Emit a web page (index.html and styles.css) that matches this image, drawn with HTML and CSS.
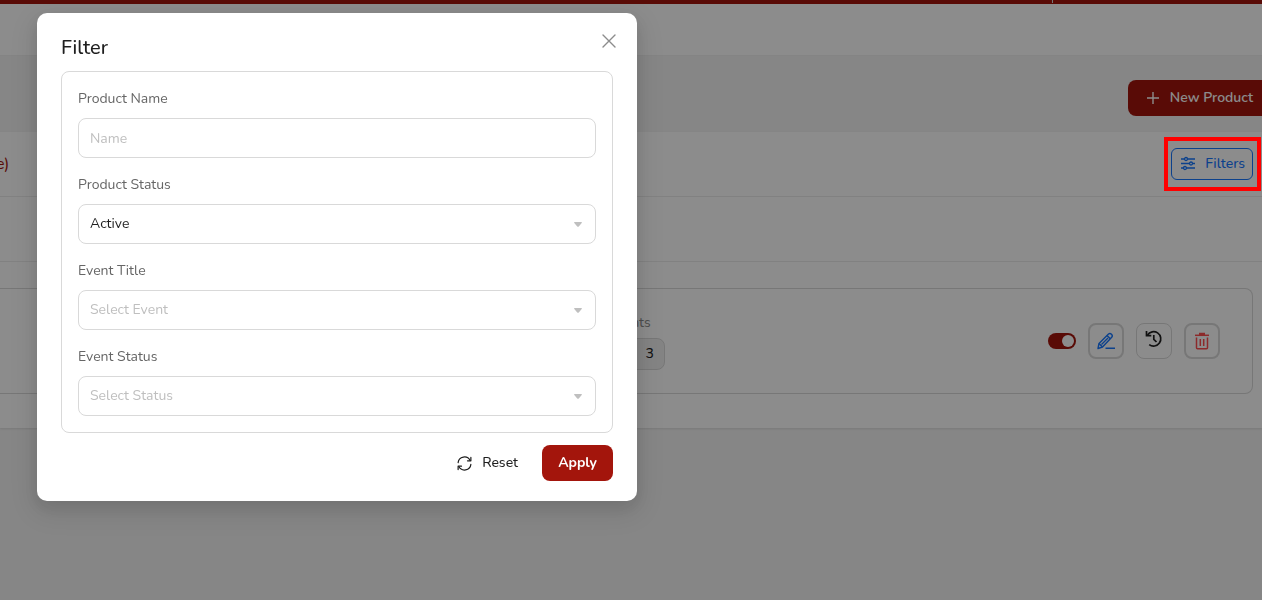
FILE: index.html
```
<!DOCTYPE html>
<html lang="en">
<head>
    <meta charset="UTF-8">
    <meta name="viewport" content="width=device-width, initial-scale=1.0">
    <title>Products</title>
    <link rel="stylesheet" href="styles.css">
</head>
<body>
    <div class="topbar"><span class="topbar-divider"></span></div>
    <header class="header"></header>

    <div class="page-actions">
        <button type="button" class="btn btn-primary btn-new">
            <svg width="14" height="14" viewBox="0 0 14 14" fill="none" stroke="currentColor" stroke-width="1.4"><path d="M7 1v12M1 7h12"/></svg>
            New Product
        </button>
    </div>

    <main class="panel">
        <div class="panel-bar">
            <a href="#" class="tab">e)</a>
            <div class="filters-wrap">
                <button type="button" class="btn-filters">
                    <svg width="16" height="16" viewBox="0 0 16 16" fill="none" stroke="currentColor" stroke-width="1.3">
                        <path d="M1 3h3.5M7.5 3H15M1 7.500h8.5M12.500 7.500H15M1 12h2.500M6.500 12H15"/>
                        <circle cx="6" cy="3" r="1.500"/><circle cx="11" cy="7.500" r="1.500"/><circle cx="5" cy="12" r="1.500"/>
                    </svg>
                    Filters
                </button>
                <span class="highlight"></span>
            </div>
        </div>
        <div class="panel-row"></div>

        <div class="product">
            <div class="product-events">
                <span class="product-label">Events</span>
                <span class="count">3</span>
            </div>
            <div class="product-actions">
                <input type="checkbox" class="switch" aria-label="Product enabled" checked>
                <button type="button" class="icon-btn edit" aria-label="Edit">
                    <svg width="20" height="20" viewBox="0 0 20 20" fill="none" stroke="currentColor" stroke-width="1.4" stroke-linejoin="round">
                        <path d="M2 17.500l1-5L12.500 3q1.500-1.200 3 .2t.2 3L6.500 16z"/>
                        <path d="M3 12.500l3.500 3.500M11 4.500l3.300 3.300M5.500 13.500l6.500-6.500M9.500 17.300H19"/>
                    </svg>
                </button>
                <button type="button" class="icon-btn history" aria-label="History">
                    <svg width="20" height="20" viewBox="0 0 20 20" fill="none" stroke="currentColor" stroke-width="1.7">
                        <path d="M3.500 6A7.200 7.200 0 1 1 5.200 15.600"/>
                        <path d="M2.500 2v4.700h4.800M9.800 6v4.300l2.700 2.700"/>
                    </svg>
                </button>
                <button type="button" class="icon-btn delete" aria-label="Delete">
                    <svg width="20" height="20" viewBox="0 0 20 20" fill="none" stroke="currentColor" stroke-width="1.5">
                        <path d="M3 4.300h14"/><path d="M7 3h6" stroke-width="2.5"/>
                        <path d="M4.500 6.500v10.200q0 1 1 1h9q1 0 1-1V6.500M8.300 8v7M11.700 8v7"/>
                    </svg>
                </button>
            </div>
        </div>
    </main>

    <div class="mask">
        <form class="modal" role="dialog" aria-labelledby="filterTitle">
            <div class="modal-header">
                <h1 id="filterTitle">Filter</h1>
                <button type="button" class="close" aria-label="Close">
                    <svg width="14" height="14" viewBox="0 0 14 14" fill="none" stroke="currentColor" stroke-width="1.4" stroke-linecap="round"><path d="M1 1l12 12M13 1L1 13"/></svg>
                </button>
            </div>

            <div class="fields">
                <div class="field">
                    <label for="name">Product Name</label>
                    <input type="text" id="name" class="control" placeholder="Name">
                </div>
                <div class="field">
                    <label for="status">Product Status</label>
                    <div class="select-wrap">
                        <select id="status" class="control">
                            <option>Active</option>
                            <option>Inactive</option>
                        </select>
                        <svg class="caret" width="8" height="5" viewBox="0 0 8 5"><path d="M.5 0h7q.8.500 0 1.200L5 4.300q-1 1-2 0L.5 1.200Q-.3.500.5 0z" fill="currentColor"/></svg>
                    </div>
                </div>
                <div class="field">
                    <label for="event">Event Title</label>
                    <div class="select-wrap">
                        <select id="event" class="control empty">
                            <option>Select Event</option>
                        </select>
                        <svg class="caret" width="8" height="5" viewBox="0 0 8 5"><path d="M.5 0h7q.8.500 0 1.200L5 4.300q-1 1-2 0L.5 1.200Q-.3.500.5 0z" fill="currentColor"/></svg>
                    </div>
                </div>
                <div class="field">
                    <label for="eventStatus">Event Status</label>
                    <div class="select-wrap">
                        <select id="eventStatus" class="control empty">
                            <option>Select Status</option>
                        </select>
                        <svg class="caret" width="8" height="5" viewBox="0 0 8 5"><path d="M.5 0h7q.8.500 0 1.200L5 4.300q-1 1-2 0L.5 1.200Q-.3.500.5 0z" fill="currentColor"/></svg>
                    </div>
                </div>
            </div>

            <div class="modal-footer">
                <button type="reset" class="btn btn-text">
                    <svg width="15" height="15" viewBox="0 0 16 16" fill="none" stroke="currentColor" stroke-width="1.3" stroke-linecap="round" stroke-linejoin="round">
                        <path d="M1.200 7A6.800 6.800 0 0 1 14 4.700M14.800 9A6.800 6.800 0 0 1 2 11.300"/>
                        <path d="M14.800 1.500v3.600h-3.600M1.200 14.500v-3.600h3.600"/>
                    </svg>
                    Reset
                </button>
                <button type="submit" class="btn btn-primary btn-apply">Apply</button>
            </div>
        </form>
    </div>
</body>
</html>
```
FILE: styles.css
```
:root {
    --primary: #a3150c;
    --blue: #1677ff;
    --border: #d9d9d9;
    --text: #1f1f1f;
}

* {
    margin: 0;
    padding: 0;
    box-sizing: border-box;
}

body {
    background: #f4f4f4;
    color: var(--text);
    font-family: Nunito, "Open Sans", sans-serif;
    font-size: 14px;
    line-height: 22px;
    min-height: 100vh;
    overflow: hidden;
}

button,
input,
select {
    font: inherit;
    color: inherit;
}

button {
    cursor: pointer;
}

svg {
    flex-shrink: 0;
}

/* Page */
.topbar {
    height: 4px;
    background: var(--primary);
    display: flex;
    justify-content: flex-end;
    padding-right: 209px;
}

.topbar-divider {
    width: 1px;
    height: 3px;
    background: #d9d9d9;
}

.header {
    height: 52px;
    background: #fff;
    border-bottom: 1px solid #f0f0f0;
}

.page-actions {
    display: flex;
    justify-content: flex-end;
    padding: 24px 0 16px;
}

.btn {
    display: inline-flex;
    align-items: center;
    gap: 10px;
    height: 36px;
    border: none;
    border-radius: 8px;
    white-space: nowrap;
}

.btn-primary {
    background: var(--primary);
    color: #fff;
    padding: 0 16px;
}

.btn-new {
    padding-left: 18px;
    margin-right: -7px;
    font-weight: 600;
}

.panel {
    background: #fff;
    padding-bottom: 34px;
    box-shadow: 0 1px 2px rgba(0, 0, 0, 0.1);
}

.panel-bar {
    display: flex;
    align-items: center;
    justify-content: space-between;
    height: 65px;
    padding-right: 9px;
    border-bottom: 1px solid #ececec;
}

.tab {
    color: var(--primary);
    font-size: 16px;
    text-decoration: none;
    margin-left: -4px;
}

.filters-wrap {
    position: relative;
}

.btn-filters {
    display: flex;
    align-items: center;
    gap: 9px;
    height: 32px;
    padding: 0 7px 0 8px;
    background: #fff;
    border: 1px solid var(--blue);
    border-radius: 6px;
    color: var(--blue);
    font-weight: 500;
}

.highlight {
    position: absolute;
    inset: -11px -8px -11px -7px;
    border: 4px solid #ff0000;
    z-index: 20;
    pointer-events: none;
}

.panel-row {
    height: 65px;
    border-bottom: 1px solid #ececec;
}

.product {
    display: grid;
    grid-template-columns: 17fr 18fr;
    align-items: center;
    height: 106px;
    margin: 26px 9px 0 0;
    padding-right: 32px;
    border: 1px solid var(--border);
    border-left: none;
    border-radius: 0 8px 8px 0;
}

.product-events {
    grid-column: 2;
    grid-row: 1;
    display: flex;
    flex-direction: column;
    align-items: flex-start;
    gap: 4px;
    margin-left: 16px;
}

.product-label {
    color: #8c8c8c;
}

.count {
    height: 32px;
    padding: 4px 10px 4px 36px;
    background: #f0f0f0;
    border: 1px solid var(--border);
    border-radius: 8px;
    font-weight: 500;
}

.product-actions {
    grid-column: 2;
    grid-row: 1;
    justify-self: end;
    display: flex;
    align-items: center;
    gap: 12px;
}

.switch {
    appearance: none;
    display: flex;
    align-items: center;
    justify-content: flex-end;
    width: 28px;
    height: 16px;
    padding: 2px;
    background: var(--primary);
    border-radius: 8px;
}

.switch::before {
    content: '';
    width: 12px;
    height: 12px;
    background: #fff;
    border-radius: 50%;
}

.icon-btn {
    display: grid;
    place-items: center;
    width: 36px;
    height: 36px;
    background: #fff;
    border: 2px solid var(--border);
    border-radius: 8px;
}

.edit {
    color: var(--blue);
}

.history {
    border-width: 1px;
    padding-bottom: 4px;
}

.delete {
    color: #ff4d4f;
}

/* Filter dialog */
.mask {
    position: fixed;
    inset: 0;
    z-index: 10;
    padding: 13px 37px;
    background: rgba(0, 0, 0, 0.45);
}

.modal {
    max-width: 600px;
    padding: 20px 24px;
    background: #fff;
    border-radius: 10px;
    box-shadow: 0 6px 16px rgba(0, 0, 0, 0.1), 0 9px 28px 8px rgba(0, 0, 0, 0.08);
}

.modal-header {
    display: flex;
    align-items: flex-start;
    justify-content: space-between;
    margin-bottom: 8px;
}

.modal-header h1 {
    font-size: 20px;
    line-height: 30px;
    font-weight: 500;
}

.close {
    display: grid;
    place-items: center;
    width: 16px;
    height: 16px;
    margin-right: -4px;
    background: none;
    border: none;
    color: #8c8c8c;
}

.fields {
    display: flex;
    flex-direction: column;
    gap: 16px;
    padding: 16px;
    border: 1px solid var(--border);
    border-radius: 8px;
}

.field {
    display: flex;
    flex-direction: column;
    gap: 8px;
}

.field label {
    color: #666;
}

.control {
    appearance: none;
    width: 100%;
    height: 40px;
    padding: 0 11px;
    background: #fff;
    border: 1px solid var(--border);
    border-radius: 8px;
}

.control::placeholder,
.control.empty {
    color: #bfbfbf;
}

.select-wrap {
    position: relative;
    display: flex;
}

.caret {
    position: absolute;
    right: 14px;
    top: 18px;
    color: #bfbfbf;
    pointer-events: none;
}

.modal-footer {
    display: flex;
    justify-content: flex-end;
    gap: 8px;
    margin-top: 12px;
}

.btn-text {
    padding: 0 16px;
    background: none;
    font-weight: 500;
}

.btn-apply {
    font-weight: 700;
}
```
